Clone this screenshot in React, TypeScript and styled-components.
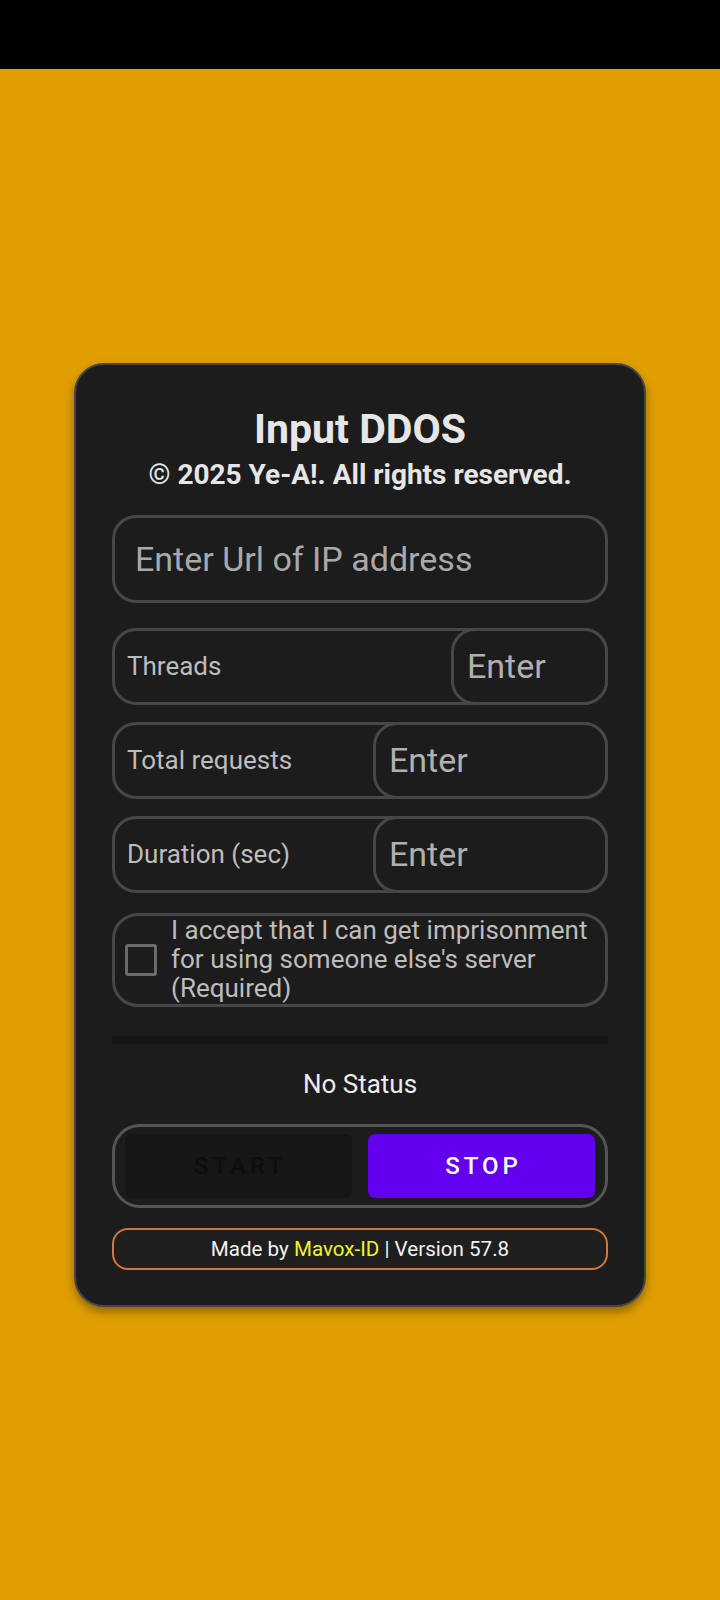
import React from "react";
import styled, { createGlobalStyle } from "styled-components";

const GlobalStyle = createGlobalStyle`
  html, body {
    margin: 0;
    padding: 0;
    background: #e09e00;
  }
  body {
    font-family: Roboto, "Noto Sans", "Liberation Sans", Arial, sans-serif;
  }
  *, *::before, *::after {
    box-sizing: border-box;
  }
`;

const Screen = styled.div`
  min-height: 1600px;
  display: flex;
  flex-direction: column;
  background: #e09e00;
`;

const StatusBar = styled.div`
  flex: none;
  height: 69px;
  background: #000;
`;

const Stage = styled.main`
  flex: 1;
  display: flex;
  align-items: center;
  justify-content: center;
`;

const Card = styled.section`
  width: 572px;
  background: #1c1c1c;
  border: 2px solid #464646;
  border-radius: 30px;
  padding: 40px 36px 35px;
  box-shadow: 0 5px 10px rgba(0, 0, 0, 0.35);
  display: flex;
  flex-direction: column;
`;

const Title = styled.h1`
  margin: 0;
  font-size: 41px;
  line-height: 48px;
  font-weight: 700;
  color: #e6e6e6;
  text-align: center;
`;

const Subtitle = styled.p`
  margin: 5px 0 0;
  font-size: 28px;
  line-height: 33px;
  font-weight: 700;
  color: #e6e6e6;
  text-align: center;
`;

const UrlInput = styled.input`
  margin-top: 24px;
  width: 100%;
  height: 88px;
  border: 3px solid #474747;
  border-radius: 24px;
  background: transparent;
  padding: 0 20px;
  font-family: Roboto, "Noto Sans", Arial, sans-serif;
  font-size: 34px;
  color: #e0e0e0;
  outline: none;
  &::placeholder {
    color: #a9a9a9;
  }
`;

const FieldList = styled.div`
  margin-top: 25px;
  display: flex;
  flex-direction: column;
  gap: 17px;
`;

const FieldRow = styled.div`
  height: 77px;
  border: 3px solid #474747;
  border-radius: 24px;
  display: flex;
  align-items: stretch;
`;

const FieldLabel = styled.label`
  flex: 1;
  display: flex;
  align-items: center;
  padding-left: 12px;
  font-size: 26px;
  color: #bdbdbd;
  white-space: nowrap;
`;

const FieldInput = styled.input<{ $width: number }>`
  flex: none;
  width: ${(p) => p.$width}px;
  margin: -3px -3px -3px 0;
  border: 3px solid #474747;
  border-radius: 24px;
  background: #1c1c1c;
  padding: 0 13px;
  font-family: Roboto, "Noto Sans", Arial, sans-serif;
  font-size: 34px;
  color: #e0e0e0;
  outline: none;
  &::placeholder {
    color: #b0b0b0;
  }
`;

const ConsentRow = styled.label`
  margin-top: 20px;
  height: 94px;
  border: 3px solid #474747;
  border-radius: 26px;
  display: flex;
  align-items: center;
  gap: 14px;
  padding: 0 8px 0 10px;
`;

const CheckBox = styled.span`
  flex: none;
  width: 32px;
  height: 32px;
  border: 3px solid #6a6a6a;
  border-radius: 3px;
`;

const ConsentText = styled.span`
  font-size: 26px;
  line-height: 29px;
  color: #bdbdbd;
`;

const Track = styled.div`
  margin-top: 29px;
  height: 8px;
  background: #161616;
`;

const Status = styled.div`
  margin-top: 25px;
  font-size: 26px;
  line-height: 30px;
  color: #ececec;
  text-align: center;
`;

const ButtonGroup = styled.div`
  margin-top: 25px;
  border: 3px solid #555555;
  border-radius: 28px;
  padding: 7px 10px;
  display: grid;
  grid-template-columns: 1fr 1fr;
  gap: 16px;
`;

const ActionButton = styled.button<{ $active: boolean }>`
  height: 64px;
  border: none;
  border-radius: 7px;
  background: ${(p) => (p.$active ? "#6200ee" : "#161616")};
  color: ${(p) => (p.$active ? "#ffffff" : "#0e0e0e")};
  font-family: Roboto, "Noto Sans", Arial, sans-serif;
  font-size: 24px;
  font-weight: 500;
  letter-spacing: 4px;
  text-transform: uppercase;
  padding: 0 0 0 4px;
`;

const Footer = styled.footer`
  margin-top: 20px;
  height: 42px;
  border: 2px solid #cf7a3c;
  border-radius: 16px;
  background: #1f1f1f;
  display: flex;
  align-items: center;
  justify-content: center;
  font-size: 20.6px;
  color: #f2f2f2;
`;

const Highlight = styled.span`
  color: #f3f32e;
`;

const fields = [
  { label: "Threads", width: 157 },
  { label: "Total requests", width: 235 },
  { label: "Duration (sec)", width: 235 },
];

export default function App() {
  return (
    <>
      <GlobalStyle />
      <Screen>
        <StatusBar />
        <Stage>
          <Card>
            <Title>Input DDOS</Title>
            <Subtitle>© 2025 Ye-A!. All rights reserved.</Subtitle>
            <UrlInput placeholder="Enter Url of IP address" />
            <FieldList>
              {fields.map((f) => (
                <FieldRow key={f.label}>
                  <FieldLabel>{f.label}</FieldLabel>
                  <FieldInput $width={f.width} placeholder="Enter" />
                </FieldRow>
              ))}
            </FieldList>
            <ConsentRow>
              <CheckBox />
              <ConsentText>
                I accept that I can get imprisonment for using someone else's server (Required)
              </ConsentText>
            </ConsentRow>
            <Track />
            <Status>No Status</Status>
            <ButtonGroup>
              <ActionButton $active={false}>Start</ActionButton>
              <ActionButton $active={true}>Stop</ActionButton>
            </ButtonGroup>
            <Footer>
              <span>
                Made by <Highlight>Mavox-ID</Highlight> | Version 57.8
              </span>
            </Footer>
          </Card>
        </Stage>
      </Screen>
    </>
  );
}
